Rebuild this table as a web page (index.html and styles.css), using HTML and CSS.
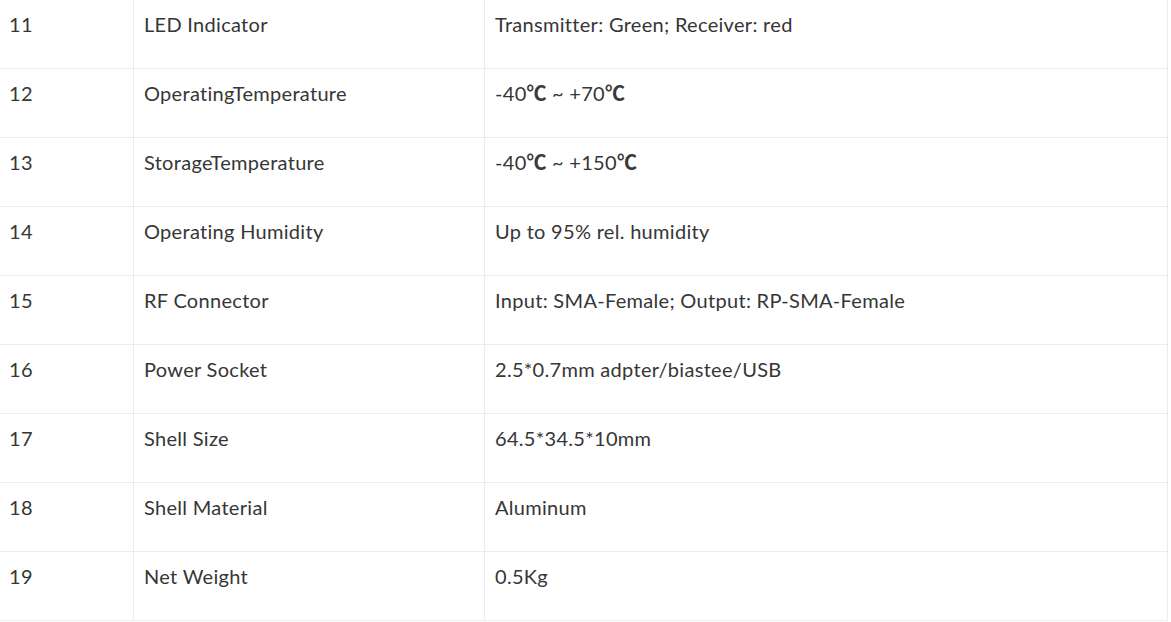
FILE: index.html
```html
<!DOCTYPE html>
<html>
<head>
<meta charset="utf-8">
<link rel="stylesheet" href="styles.css">
</head>
<body>
<table class="spec">
  <colgroup>
    <col class="c-no">
    <col class="c-name">
    <col class="c-val">
  </colgroup>
  <tbody>
    <tr><td>11</td><td>LED Indicator</td><td>Transmitter: Green; Receiver: red</td></tr>
    <tr><td>12</td><td>OperatingTemperature</td><td>-40<span class="cjk">℃</span> ~ +70<span class="cjk">℃</span></td></tr>
    <tr><td>13</td><td>StorageTemperature</td><td>-40<span class="cjk">℃</span> ~ +150<span class="cjk">℃</span></td></tr>
    <tr><td>14</td><td>Operating Humidity</td><td>Up to 95% rel. humidity</td></tr>
    <tr><td>15</td><td>RF Connector</td><td>Input: SMA-Female; Output: RP-SMA-Female</td></tr>
    <tr><td>16</td><td>Power Socket</td><td>2.5*0.7mm adpter/biastee/USB</td></tr>
    <tr><td>17</td><td>Shell Size</td><td>64.5*34.5*10mm</td></tr>
    <tr><td>18</td><td>Shell Material</td><td>Aluminum</td></tr>
    <tr><td>19</td><td>Net Weight</td><td>0.5Kg</td></tr>
  </tbody>
</table>
</body>
</html>
```
FILE: styles.css
```css
html, body {
  margin: 0;
  padding: 0;
  background: #fff;
}
.spec {
  border-collapse: separate;
  border-spacing: 0;
  table-layout: fixed;
  width: 1168px;
  font-family: "Lato", "Noto Sans CJK SC", sans-serif;
  font-size: 20px;
  line-height: 1.2;
  letter-spacing: 0.3px;
  color: #363636;
}
.c-no { width: 134px; }
.c-name { width: 351px; }
.c-val { width: 683px; }
.spec td {
  height: 69px;
  box-sizing: border-box;
  vertical-align: top;
  padding: 12px 10px 0 10px;
  border-right: 1px solid #ececec;
  border-bottom: 1px solid #ececec;
}
.spec td:first-child {
  padding-left: 9px;
}
.cjk {
  font-family: "Noto Sans CJK SC", sans-serif;
  font-size: 20px;
  font-weight: 700;
  letter-spacing: 0;
  color: #3a3a3a;
}
```
